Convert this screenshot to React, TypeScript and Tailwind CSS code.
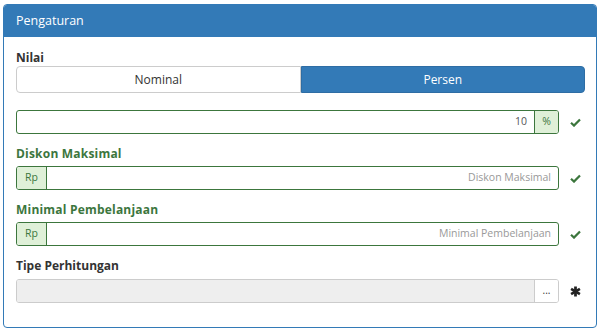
import React from "react";

const font = { fontFamily: '"Open Sans", "Noto Sans", sans-serif' };

function Check() {
  return (
    <svg width="11" height="9" viewBox="0 0 11 9" className="shrink-0">
      <path d="M1 4.8 L4 7.6 L10 1.4" fill="none" stroke="#3c763d" strokeWidth="2.2" strokeLinejoin="miter" />
    </svg>
  );
}

function Asterisk() {
  return (
    <svg width="11" height="11" viewBox="0 0 12 12" className="shrink-0">
      <g stroke="#222" strokeWidth="3" strokeLinecap="butt">
        <line x1="6" y1="0.5" x2="6" y2="11.5" />
        <line x1="1.2" y1="3.2" x2="10.8" y2="8.8" />
        <line x1="1.2" y1="8.8" x2="10.8" y2="3.2" />
      </g>
    </svg>
  );
}

function RpField({ label, placeholder }: { label: string; placeholder: string }) {
  return (
    <div className="flex flex-col">
      <div className="text-[12px] font-bold leading-[16px] text-[#3c763d] mb-[4px] tracking-[0.2px]">{label}</div>
      <div className="flex items-center">
        <div className="flex h-[24px] w-[543px] rounded-[3px] border border-[#3c763d]">
          <div className="flex w-[30px] items-center justify-center bg-[#dff0d8] border-r border-[#3c763d] text-[10.5px] text-[#3c763d] rounded-l-[2px]">Rp</div>
          <div className="flex flex-1 items-center justify-end pr-[7px] text-[10.5px] text-[#999]">{placeholder}</div>
        </div>
        <div className="ml-[10px] flex w-[12px] justify-center"><Check /></div>
      </div>
    </div>
  );
}

export default function App() {
  return (
    <div className="w-[603px] h-[331px] bg-white pt-[4px] pl-[3px]" style={font}>
      <div className="w-[594px] h-[324px] rounded-[4px] border border-[#337ab7] overflow-hidden">
        <div className="h-[32px] bg-[#337ab7] flex items-center px-[12px] text-[12.5px] font-medium text-white">Pengaturan</div>
        <div className="px-[12px] pt-[13px] flex flex-col">
          <div className="text-[12px] font-bold leading-[16px] text-[#333]">Nilai</div>
          <div className="flex h-[27px] w-[569px]">
            <div className="flex flex-1 items-center justify-center rounded-l-[4px] border border-[#ccc] bg-white text-[12px] text-[#333]">Nominal</div>
            <div className="flex flex-1 items-center justify-center rounded-r-[4px] border border-[#2e6da4] bg-[#337ab7] text-[12px] text-white">Persen</div>
          </div>
          <div className="mt-[17px] flex items-center">
            <div className="flex h-[24px] w-[543px] rounded-[3px] border border-[#3c763d]">
              <div className="flex flex-1 items-center justify-end pr-[7px] text-[10.5px] text-[#555]">10</div>
              <div className="flex w-[24px] items-center justify-center bg-[#dff0d8] border-l border-[#3c763d] text-[10.5px] text-[#3c763d] rounded-r-[2px]">%</div>
            </div>
            <div className="ml-[10px] flex w-[12px] justify-center"><Check /></div>
          </div>
          <div className="mt-[12px]">
            <RpField label="Diskon Maksimal" placeholder="Diskon Maksimal" />
          </div>
          <div className="mt-[12px]">
            <RpField label="Minimal Pembelanjaan" placeholder="Minimal Pembelanjaan" />
          </div>
          <div className="mt-[12px] flex flex-col">
            <div className="text-[12px] font-bold leading-[16px] text-[#333] mb-[5px]">Tipe Perhitungan</div>
            <div className="flex items-center">
              <div className="flex h-[24px] w-[543px] rounded-[3px] border border-[#ccc]">
                <div className="flex-1 bg-[#eee] rounded-l-[2px]" />
                <div className="flex w-[24px] items-center justify-center bg-white border-l border-[#ccc] text-[10px] text-[#333] rounded-r-[2px] leading-none pb-[3px]">...</div>
              </div>
              <div className="ml-[10px] flex w-[12px] justify-center"><Asterisk /></div>
            </div>
          </div>
        </div>
      </div>
    </div>
  );
}
